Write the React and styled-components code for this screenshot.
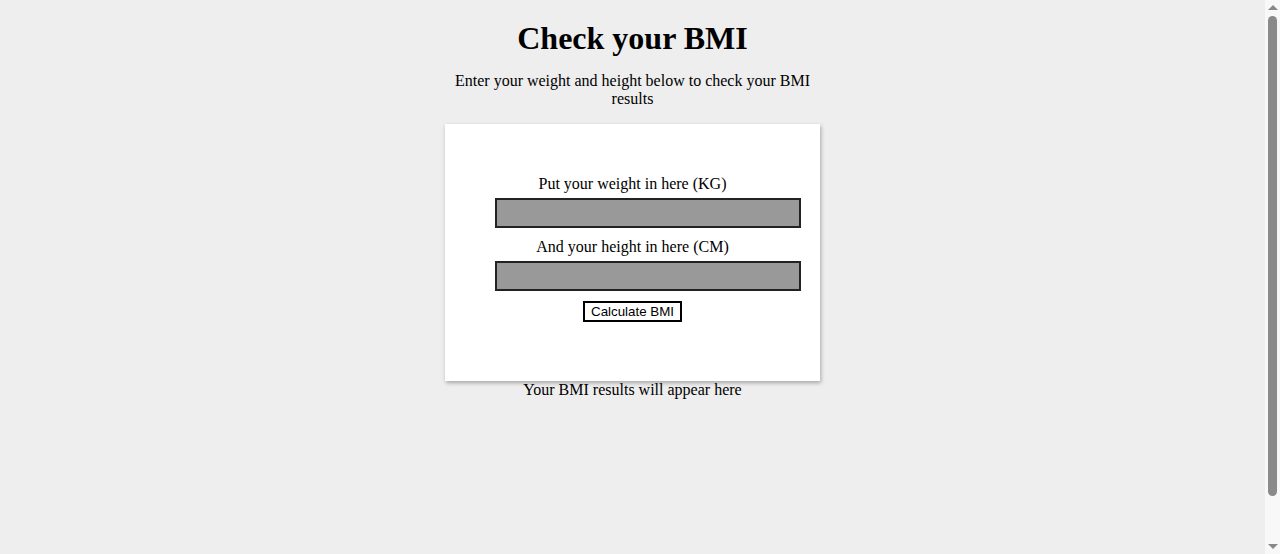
import styled, { createGlobalStyle } from "styled-components";

const GlobalStyle = createGlobalStyle`
  html, body {
    margin: 0;
    background: #eeeeee;
  }
  body {
    font-family: "Liberation Serif", "Times New Roman", serif;
    color: #000;
  }
`;

export default function App() {
  return (
    <>
      <GlobalStyle />
      <Page>
        <Title>Check your BMI</Title>
        <Intro>Enter your weight and height below to check your BMI results</Intro>
        <Card>
          <Label htmlFor="weight">Put your weight in here (KG)</Label>
          <Field id="weight" type="text" />
          <Label htmlFor="height">And your height in here (CM)</Label>
          <Field id="height" type="text" />
          <Button type="button">Calculate BMI</Button>
        </Card>
        <Result>Your BMI results will appear here</Result>
      </Page>
      <Scrollbar>
        <Arrow />
        <Thumb />
        <Arrow $down />
      </Scrollbar>
    </>
  );
}

const Page = styled.div`
  display: flex;
  flex-direction: column;
  align-items: center;
  padding: 20px 15px 0 0;
  min-height: 640px;
  box-sizing: border-box;
`;

const Title = styled.h1`
  margin: 0;
  font-size: 32px;
  line-height: 37px;
  font-weight: bold;
`;

const Intro = styled.p`
  width: 375px;
  margin: 15px 0 16px;
  font-size: 16px;
  line-height: 18px;
  text-align: center;
`;

const Card = styled.div`
  width: 375px;
  box-sizing: border-box;
  padding: 51px 0 59px;
  display: flex;
  flex-direction: column;
  align-items: center;
  background: #ffffff;
  box-shadow: 1px 2px 4px rgba(0, 0, 0, 0.3);
`;

const Label = styled.label`
  display: block;
  font-size: 16px;
  line-height: 18px;
  margin-bottom: 5px;
`;

const Field = styled.input`
  align-self: flex-start;
  margin: 0 0 10px 50px;
  width: 306px;
  height: 30px;
  box-sizing: border-box;
  background: #999999;
  border: 2px solid #222222;
  outline: none;
  padding: 0 6px;
`;

const Button = styled.button`
  height: 21px;
  box-sizing: border-box;
  padding: 1px 6px;
  background: #ffffff;
  border: 2px solid #000000;
  font-family: "Liberation Sans", Arial, sans-serif;
  font-size: 13.33px;
  line-height: 15px;
  color: #000;
`;

const Result = styled.p`
  margin: 0;
  font-size: 16px;
  line-height: 18px;
`;

/* browser scrollbar seen in the capture */
const Scrollbar = styled.div`
  position: fixed;
  top: 0;
  right: 0;
  width: 15px;
  height: 100vh;
  background: #f8f8f8;
  display: flex;
  flex-direction: column;
  align-items: center;
  justify-content: space-between;
  padding: 2px 0;
  box-sizing: border-box;
`;

const Arrow = styled.div`
  width: 0;
  height: 0;
  border-left: 5px solid transparent;
  border-right: 5px solid transparent;
  ${({ $down }) =>
    $down ? "border-top: 5px solid #888;" : "border-bottom: 5px solid #888;"}
  margin: 3px 0;
`;

const Thumb = styled.div`
  width: 9px;
  flex: 1;
  margin: 3px 0 45px;
  border-radius: 5px;
  background: #8a8a8a;
`;
